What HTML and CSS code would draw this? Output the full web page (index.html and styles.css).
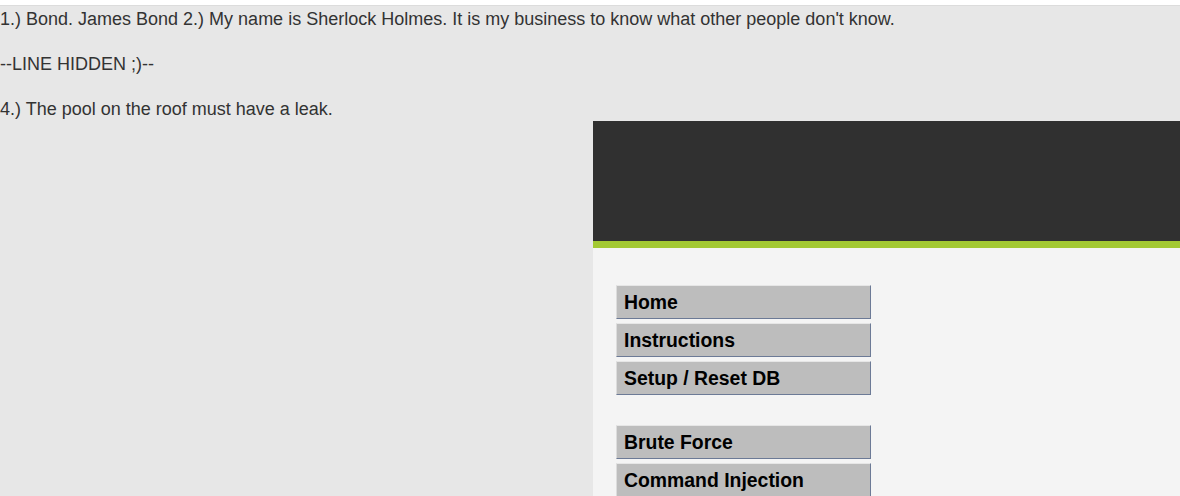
FILE: index.html
```html
<!DOCTYPE html>
<html>
<head>
<meta charset="utf-8">
<link rel="stylesheet" href="styles.css">
</head>
<body>
<div class="topstrip"></div>
<div class="page">
  <div class="leak">
    <div class="line">1.) Bond. James Bond 2.) My name is Sherlock Holmes. It is my business to know what other people don't know.</div>
    <div class="line">--LINE HIDDEN ;)--</div>
    <div class="line">4.) The pool on the roof must have a leak.</div>
  </div>
  <div class="wrap">
    <div class="site">
      <div class="header"></div>
      <div class="main">
        <ul class="menu">
          <li class="item">Home</li>
          <li class="item">Instructions</li>
          <li class="item">Setup / Reset DB</li>
        </ul>
        <ul class="menu">
          <li class="item">Brute Force</li>
          <li class="item">Command Injection</li>
        </ul>
      </div>
    </div>
  </div>
</div>
</body>
</html>
```

FILE: styles.css
```css
html, body {
  margin: 0;
  padding: 0;
  height: 100%;
  overflow: hidden;
}
body {
  background: #e7e7e7;
  font-family: "Liberation Sans", Arial, sans-serif;
  color: #333;
}
.topstrip {
  height: 5px;
  background: #ffffff;
  border-bottom: 1px solid #dcdcdc;
}
.leak {
  padding-top: 2px;
  font-size: 18px;
  line-height: 22.5px;
}
.line + .line {
  margin-top: 22.5px;
}
.wrap {
  display: flex;
  justify-content: flex-end;
}
.site {
  width: 587px;
  background: #f4f4f4;
  height: 375px;
  overflow: hidden;
}
.header {
  height: 120px;
  background: #303030;
  border-bottom: 7px solid #a3c933;
}
.main {
  padding: 37px 0 0 23px;
}
.menu {
  list-style: none;
  margin: 0 0 30px 0;
  padding: 0;
  display: flex;
  flex-direction: column;
  gap: 4px;
}
.item {
  width: 246px;
  height: 32px;
  line-height: 32px;
  padding-left: 7px;
  background: #bdbdbd;
  border-top: 1px solid #e6e6e6;
  border-left: 1px solid #dcdcdc;
  border-right: 1px solid #6c7a96;
  border-bottom: 1px solid #6c7a96;
  color: #000;
  font-weight: bold;
  font-size: 19.4px;
}
```
